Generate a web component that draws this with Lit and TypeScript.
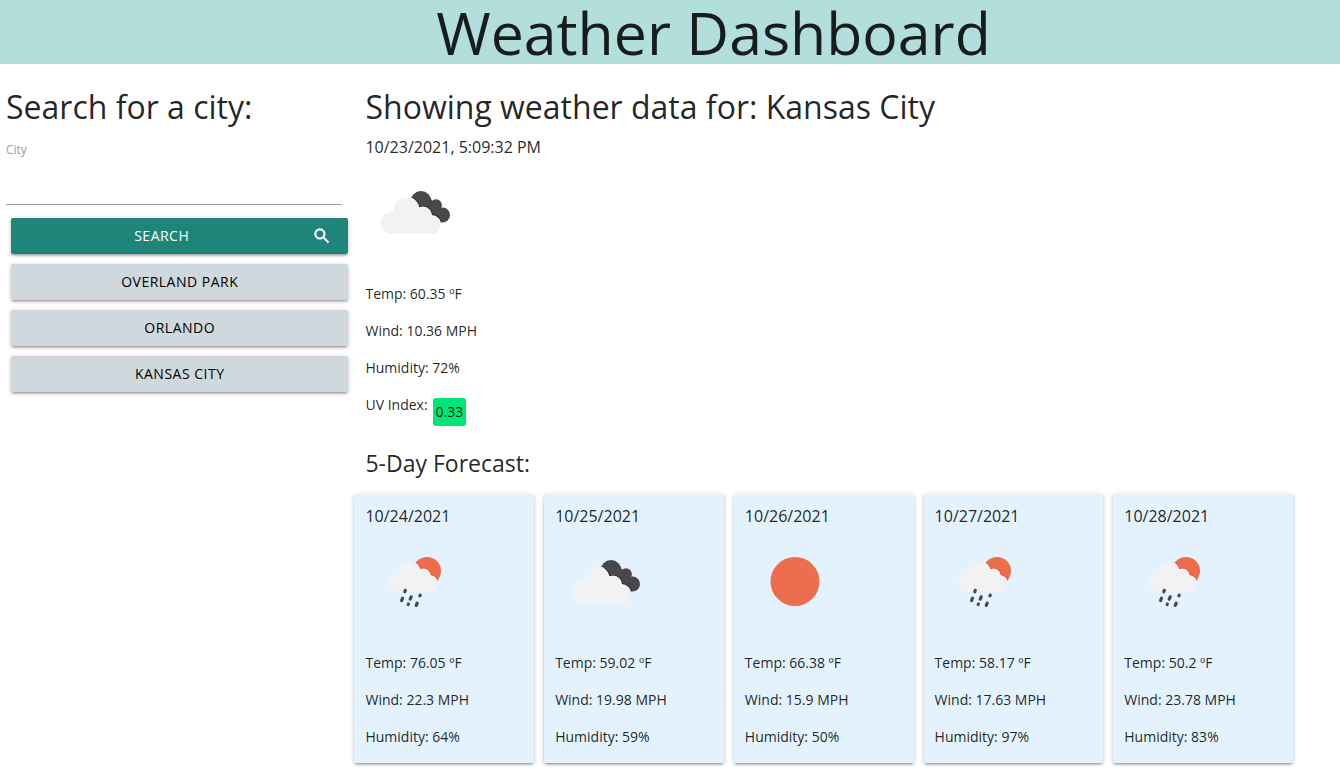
import { LitElement, html, svg, css } from "lit";
import { customElement, property, state } from "lit/decorators.js";

type Sky = "clouds" | "rain" | "clear";

interface Day {
  date: string;
  sky: Sky;
  temp: string;
  wind: string;
  humidity: string;
}

const FORECAST: Day[] = [
  { date: "10/24/2021", sky: "rain", temp: "76.05", wind: "22.3", humidity: "64" },
  { date: "10/25/2021", sky: "clouds", temp: "59.02", wind: "19.98", humidity: "59" },
  { date: "10/26/2021", sky: "clear", temp: "66.38", wind: "15.9", humidity: "50" },
  { date: "10/27/2021", sky: "rain", temp: "58.17", wind: "17.63", humidity: "97" },
  { date: "10/28/2021", sky: "rain", temp: "50.2", wind: "23.78", humidity: "83" },
];

const SKY_NAMES: Record<Sky, string> = {
  clouds: "Broken clouds",
  rain: "Rain",
  clear: "Clear sky",
};

@customElement("weather-icon")
export class WeatherIcon extends LitElement {
  @property() sky: Sky = "clear";

  static styles = css`
    :host {
      display: block;
      width: 100px;
      height: 100px;
    }
    svg {
      display: block;
    }
  `;

  private clouds() {
    const dark = svg`
      <circle cx="56" cy="38.6" r="10.5"/>
      <circle cx="71" cy="42.2" r="5.9"/>
      <circle cx="77.6" cy="52" r="7.4"/>
      <path d="M50 46 L64 34.5 L75 45 L78 59 L71 59 Z"/>`;
    const cloud = svg`
      <circle cx="27" cy="59.7" r="11"/>
      <circle cx="41" cy="47" r="12.6"/>
      <circle cx="58" cy="52.5" r="8"/>
      <circle cx="66.4" cy="61.9" r="8.9"/>
      <path d="M27 50 H64 V70.8 H27 Z"/>`;
    return svg`
      <clipPath id="behind">${dark}</clipPath>
      <g fill="#48484a">${dark}</g>
      <g clip-path="url(#behind)">
        <g fill="#2c2c2e" stroke="#2c2c2e" stroke-width="3.6">${cloud}</g>
        <g fill="#fff" stroke="#fff" stroke-width="2">${cloud}</g>
      </g>
      <g fill="#f2f2f2">${cloud}</g>`;
  }

  private rain() {
    const cloud = svg`
      <circle cx="33.2" cy="50.3" r="9"/>
      <circle cx="44.4" cy="40.2" r="10.5"/>
      <circle cx="58.4" cy="44" r="6.6"/>
      <circle cx="64.6" cy="51.5" r="7.8"/>
      <path d="M33.2 42 H63 V59.3 H33.2 Z"/>`;
    return svg`
      <clipPath id="behind"><circle cx="62" cy="39" r="14"/></clipPath>
      <circle cx="62" cy="39" r="14" fill="#ec6e4c"/>
      <g clip-path="url(#behind)">
        <g fill="#e8512f" stroke="#e8512f" stroke-width="3.2">${cloud}</g>
        <g fill="#fff" stroke="#fff" stroke-width="1.6">${cloud}</g>
      </g>
      <g fill="#f2f2f2">${cloud}</g>
      <path d="M40.3 58.3 L39.8 59.8 M37.5 66.2 L36.6 68.6 M46.2 64.8 L45.2 67.2 M55.2 63.2 L54.9 63.8 M43.4 72 L43.2 72.5 M52.2 71.2 L51.3 73.4"
        stroke="#48484a" stroke-width="3.2" stroke-linecap="round"/>`;
  }

  render() {
    const shape =
      this.sky === "clouds"
        ? this.clouds()
        : this.sky === "rain"
          ? this.rain()
          : svg`<circle cx="50" cy="49.5" r="24.5" fill="#ec6e4c"/>`;
    return html`<svg width="100" height="100" viewBox="0 0 100 100" role="img" aria-label=${SKY_NAMES[this.sky]}>${shape}</svg>`;
  }
}

@customElement("app-root")
export class AppRoot extends LitElement {
  @state() private cities = ["Overland Park", "Orlando", "Kansas City"];

  static styles = css`
    :host {
      display: block;
      font-family: "Segoe UI", "Open Sans", "Noto Sans", sans-serif;
      font-size: 14px;
      line-height: 22px;
      color: rgba(0, 0, 0, 0.87);
    }
    * {
      box-sizing: border-box;
    }
    h1,
    h2,
    h3,
    p {
      margin: 0;
      font-weight: 400;
    }
    .banner {
      background: #b2dfdb;
      padding-left: 87px;
      text-align: center;
    }
    .banner h1 {
      font-size: 59px;
      line-height: 64px;
    }
    .layout {
      display: grid;
      grid-template-columns: 355fr 950fr;
      padding: 24px 37px 12px 0;
    }
    .heading {
      font-size: 32px;
      line-height: 38px;
      white-space: nowrap;
    }
    .search {
      padding: 0 6px;
    }
    .field {
      display: flex;
      flex-direction: column;
      margin: 13px 6px 13px 0;
    }
    .field label {
      font-size: 12px;
      line-height: 22px;
      color: #9e9e9e;
    }
    .field input {
      height: 44px;
      border: 0;
      border-bottom: 1px solid #9e9e9e;
      background: transparent;
      font: inherit;
      font-size: 16px;
      outline: none;
      padding: 0;
      min-width: 0;
    }
    .buttons {
      display: flex;
      flex-direction: column;
      gap: 10px;
      padding-left: 5px;
    }
    .button {
      display: flex;
      align-items: center;
      gap: 16px;
      width: 100%;
      height: 36px;
      padding: 0 16px;
      border: 0;
      border-radius: 2px;
      background: #cfd8dc;
      color: #000;
      font: inherit;
      letter-spacing: 0.5px;
      text-transform: uppercase;
      cursor: pointer;
      box-shadow: 0 2px 2px 0 rgba(0, 0, 0, 0.14), 0 3px 1px -2px rgba(0, 0, 0, 0.12),
        0 1px 5px 0 rgba(0, 0, 0, 0.2);
    }
    .button span {
      flex: 1;
    }
    .submit {
      background: #1f8579;
      color: #fff;
    }
    .current {
      padding-left: 11px;
    }
    .date {
      font-size: 16px;
      line-height: 20px;
    }
    .current .date {
      margin: 11px 0 6px;
    }
    .readings {
      display: flex;
      flex-direction: column;
      gap: 15px;
      margin-top: 20px;
    }
    .uv {
      display: flex;
      gap: 5px;
    }
    .uv-value {
      margin-top: 4px;
      padding: 3px;
      border-radius: 3px;
      background: #00e676;
    }
    .subheading {
      margin: 24px 0 17px 11px;
      font-size: 23px;
      line-height: 27px;
    }
    .forecast {
      display: grid;
      grid-template-columns: repeat(5, 1fr);
      gap: 10px;
      padding-right: 10px;
    }
    .card {
      padding: 12px 11px 15px;
      border-radius: 2px;
      background: #e3f2fd;
      box-shadow: 0 2px 2px 0 rgba(0, 0, 0, 0.14), 0 3px 1px -2px rgba(0, 0, 0, 0.12),
        0 1px 5px 0 rgba(0, 0, 0, 0.2);
    }
    .card .date {
      margin-bottom: 6px;
    }
  `;

  private onSubmit(event: Event) {
    event.preventDefault();
    const input = this.renderRoot.querySelector<HTMLInputElement>("#city");
    const city = input?.value.trim();
    if (city && !this.cities.includes(city)) this.cities = [...this.cities, city];
  }

  private renderDay(day: Day) {
    return html`
      <article class="card">
        <h3 class="date">${day.date}</h3>
        <weather-icon .sky=${day.sky}></weather-icon>
        <div class="readings">
          <p>Temp: ${day.temp} ºF</p>
          <p>Wind: ${day.wind} MPH</p>
          <p>Humidity: ${day.humidity}%</p>
        </div>
      </article>
    `;
  }

  render() {
    return html`
      <header class="banner"><h1>Weather Dashboard</h1></header>
      <main class="layout">
        <form class="search" @submit=${this.onSubmit}>
          <h2 class="heading">Search for a city:</h2>
          <div class="field">
            <label for="city">City</label>
            <input id="city" type="text" autocomplete="off" />
          </div>
          <div class="buttons">
            <button class="button submit" type="submit">
              <span>Search</span>
              <svg width="20" height="20" viewBox="0 0 24 24" fill="#fff" stroke="#fff" stroke-width="0.5" aria-hidden="true">
                <path
                  d="M15.5 14h-.79l-.28-.27C15.41 12.59 16 11.11 16 9.5 16 5.91 13.09 3 9.5 3S3 5.91 3 9.5 5.91 16 9.5 16c1.61 0 3.09-.59 4.23-1.57l.27.28v.79l5 4.99L20.49 19l-4.99-5zm-6 0C7.01 14 5 11.99 5 9.5S7.01 5 9.5 5 14 7.01 14 9.5 11.99 14 9.5 14z"
                />
              </svg>
            </button>
            ${this.cities.map((city) => html`<button class="button" type="button"><span>${city}</span></button>`)}
          </div>
        </form>
        <section>
          <div class="current">
            <h2 class="heading">Showing weather data for: Kansas City</h2>
            <p class="date">10/23/2021, 5:09:32 PM</p>
            <weather-icon .sky=${"clouds"}></weather-icon>
            <div class="readings">
              <p>Temp: 60.35 ºF</p>
              <p>Wind: 10.36 MPH</p>
              <p>Humidity: 72%</p>
              <p class="uv">UV Index: <span class="uv-value">0.33</span></p>
            </div>
          </div>
          <h2 class="subheading">5-Day Forecast:</h2>
          <div class="forecast">${FORECAST.map((day) => this.renderDay(day))}</div>
        </section>
      </main>
    `;
  }
}
